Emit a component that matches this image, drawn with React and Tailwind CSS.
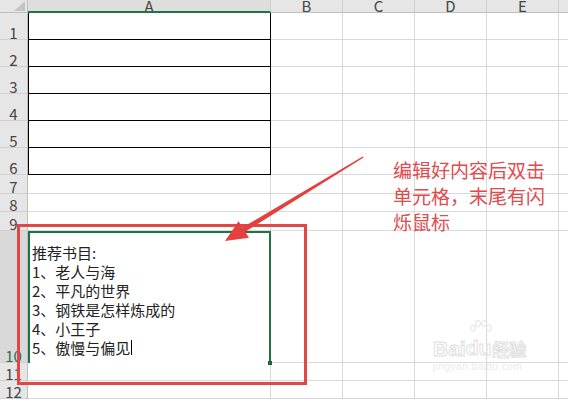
import React from "react";

function ColHeader({ label, selected, last }) {
  return (
    <div
      className={
        "flex justify-center overflow-hidden border-b text-[15px] leading-[12px] text-[#444] " +
        (last ? "" : "border-r border-r-[#cfcfcf] ") +
        (selected
          ? "bg-[#dedede] border-b-2 border-b-[#217346]"
          : "bg-[#e6e6e6] border-b-[#bfbfbf]")
      }
    >
      <span>{label}</span>
    </div>
  );
}

function RowHeader({ n, selected }) {
  return (
    <div
      className={
        "flex items-end justify-center overflow-hidden border-r border-b border-r-[#bfbfbf] border-b-[#d0d0d0] text-[15px] leading-[12px] " +
        (selected ? "bg-[#d9d9d9] text-[#217346]" : "bg-[#e6e6e6] text-[#444]")
      }
    >
      <span>{n}</span>
    </div>
  );
}

function Cell({ className = "" }) {
  return <div className={"border-r border-b border-[#d9d9d9] " + className} />;
}

export default function App() {
  const rows = [1, 2, 3, 4, 5, 6, 7, 8, 9, 10, 11, 12];
  return (
    <div
      className="relative w-[568px] h-[399px] overflow-hidden bg-white"
      style={{ fontFamily: '"Noto Sans CJK SC", "Noto Sans", sans-serif' }}
    >
      <div className="grid grid-cols-[28px_243px_72px_72px_72px_72px_1fr] grid-rows-[13px_27px_27px_27px_27px_27px_27px_19px_18px_19px_132px_18px_18px]">
        <div className="relative bg-[#e6e6e6] border-r border-b border-[#bfbfbf]">
          <svg className="absolute right-[2px] bottom-[1px]" width="11" height="10" viewBox="0 0 11 10">
            <polygon points="11,0 11,10 0,10" fill="#c4c4c4" />
          </svg>
        </div>
        <ColHeader label="A" selected />
        <ColHeader label="B" />
        <ColHeader label="C" />
        <ColHeader label="D" />
        <ColHeader label="E" />
        <ColHeader label="" last />

        {rows.map((r) => {
          const cells = [];
          cells.push(<RowHeader key={"h" + r} n={r} selected={r === 10} />);
          if (r <= 6) {
            cells.push(
              <div key={"a" + r} className="border-l border-r border-b border-black" />
            );
          } else if (r === 10) {
            cells.push(
              <div
                key={"a" + r}
                className="relative border-l-2 border-t-2 border-r-2 border-[#217346] pl-[2px] pt-[10px] text-[15px] leading-[19px] text-[#222]"
              >
                <div>推荐书目:</div>
                <div>1、老人与海</div>
                <div>2、平凡的世界</div>
                <div>3、钢铁是怎样炼成的</div>
                <div>4、小王子</div>
                <div className="flex items-center">
                  <span>5、傲慢与偏见</span>
                  <span className="ml-[1px] inline-block w-px h-[15px] bg-black" />
                </div>
                <div className="absolute right-[-3px] bottom-[-2px] w-[4px] h-[4px] bg-[#217346] border border-[#1d5e3a]" />
              </div>
            );
          } else {
            cells.push(<Cell key={"a" + r} />);
          }
          for (let c = 0; c < 5; c++) {
            cells.push(
              <Cell key={"c" + r + "-" + c} className={c === 4 ? "border-r-0" : ""} />
            );
          }
          return cells;
        })}
      </div>

      <div className="absolute left-[17px] top-[224px] w-[290px] h-[161px] border-[3px] border-[#e04848]" />

      <svg className="absolute left-0 top-0" width="568" height="399" viewBox="0 0 568 399">
        <polygon
          points="362.7,156.4 242.5,227.5 238.6,221.2 225,241 249,237.8 245.1,231.7 363.6,157.6"
          fill="#e5403f"
        />
      </svg>

      <div className="absolute left-[393px] top-[157px] text-[19px] leading-[26px] text-[#e24a4e]">
        <div>编辑好内容后双击</div>
        <div>单元格，末尾有闪</div>
        <div>烁鼠标</div>
      </div>

      <div className="absolute left-[433px] top-[336px] text-white">
        <div className="flex items-end">
          <span
            className="text-[21px] font-bold leading-[22px] [-webkit-text-stroke:1px_#e0e0e0]"
            style={{ fontFamily: '"Liberation Sans", sans-serif' }}
          >
            Bai
          </span>
          <span className="relative">
            <svg className="absolute left-[1px] top-[-16px]" width="26" height="20" viewBox="0 0 26 20">
              <g fill="none" stroke="#e2e2e2" strokeWidth="1">
                <ellipse cx="6" cy="8" rx="2.5" ry="3" />
                <ellipse cx="11" cy="3.5" rx="2.5" ry="3" />
                <ellipse cx="17" cy="3.5" rx="2.5" ry="3" />
                <ellipse cx="22" cy="8" rx="2.5" ry="3" />
              </g>
            </svg>
            <span
              className="text-[21px] font-bold leading-[22px] [-webkit-text-stroke:1px_#e0e0e0]"
              style={{ fontFamily: '"Liberation Sans", sans-serif' }}
            >
              du
            </span>
          </span>
          <span className="ml-[1px] text-[17px] font-bold leading-[22px] [-webkit-text-stroke:1px_#e0e0e0]">
            经验
          </span>
        </div>
        <div
          className="mt-[2px] text-[10px] leading-[10px] text-[#ebebeb] tracking-[0.5px]"
          style={{ fontFamily: '"Liberation Sans", sans-serif' }}
        >
          jingyan.baidu.com
        </div>
      </div>
    </div>
  );
}
